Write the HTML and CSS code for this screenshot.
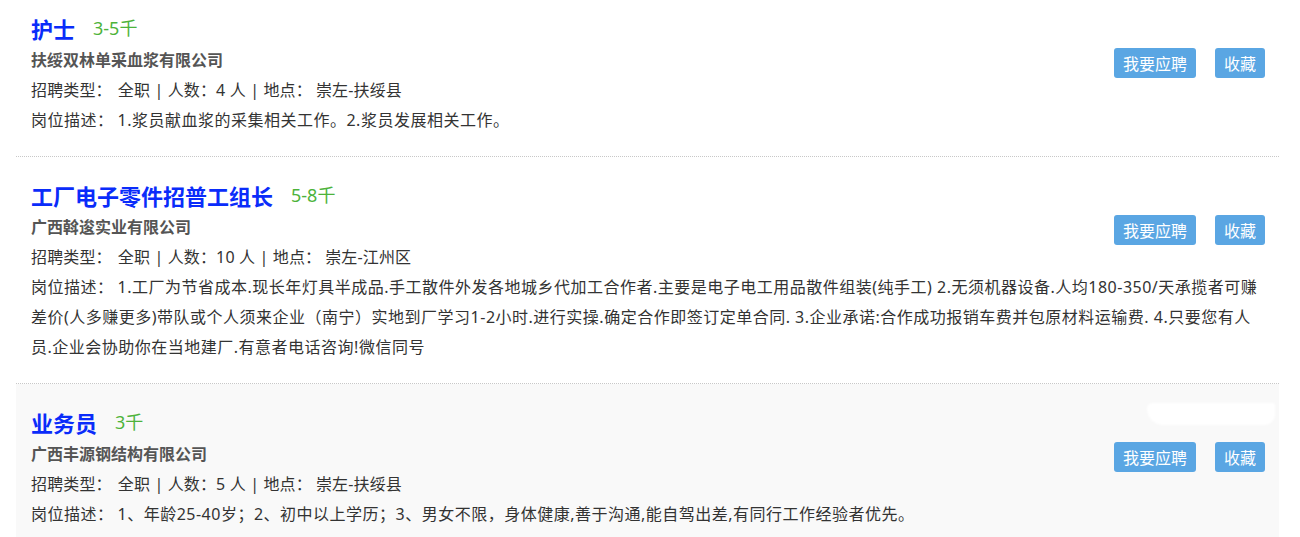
FILE: index.html
```html
<!DOCTYPE html>
<html lang="zh-CN">
<head>
<meta charset="utf-8">
<title>招聘列表</title>
<link rel="stylesheet" href="styles.css">
</head>
<body>
<ul class="job-list">
  <li class="job">
    <div class="job-title"><a class="name">护士</a><span class="salary">3-5千</span></div>
    <div class="company">扶绥双林单采血浆有限公司</div>
    <div class="info"><span class="label">招聘类型：</span>全职 | 人数：4 人 | 地点：<span class="gap"></span>崇左-扶绥县</div>
    <div class="desc"><span class="label">岗位描述：</span>1.浆员献血浆的采集相关工作。2.浆员发展相关工作。</div>
    <div class="actions"><a class="btn">我要应聘</a><a class="btn">收藏</a></div>
  </li>
  <li class="job">
    <div class="job-title"><a class="name">工厂电子零件招普工组长</a><span class="salary">5-8千</span></div>
    <div class="company">广西斡逡实业有限公司</div>
    <div class="info"><span class="label">招聘类型：</span>全职 | 人数：10 人 | 地点：<span class="gap"></span>崇左-江州区</div>
    <div class="desc"><span class="label">岗位描述：</span>1.工厂为节省成本.现长年灯具半成品.手工散件外发各地城乡代加工合作者.主要是电子电工用品散件组装(纯手工) 2.无须机器设备.人均180-350/天承揽者可赚差价(人多赚更多)带队或个人须来企业（南宁）实地到厂学习1-2小时.进行实操.确定合作即签订定单合同. 3.企业承诺:合作成功报销车费并包原材料运输费. 4.只要您有人员.企业会协助你在当地建厂.有意者电话咨询!微信同号</div>
    <div class="actions"><a class="btn">我要应聘</a><a class="btn">收藏</a></div>
  </li>
  <li class="job job-hover">
    <div class="job-title"><a class="name">业务员</a><span class="salary">3千</span></div>
    <div class="company">广西丰源钢结构有限公司</div>
    <div class="info"><span class="label">招聘类型：</span>全职 | 人数：5 人 | 地点：<span class="gap"></span>崇左-扶绥县</div>
    <div class="desc"><span class="label">岗位描述：</span>1、年龄25-40岁；2、初中以上学历；3、男女不限，身体健康,善于沟通,能自驾出差,有同行工作经验者优先。</div>
    <div class="actions"><a class="btn">我要应聘</a><a class="btn">收藏</a></div>
    <span class="smudge"></span>
  </li>
</ul>
</body>
</html>
```

FILE: styles.css
```css
html, body {
  margin: 0;
  padding: 0;
  background: #fff;
}
body {
  font-family: "Noto Sans", "Noto Sans CJK SC", sans-serif;
  color: #333;
  overflow: hidden;
}
.job-list {
  list-style: none;
  margin: -10px 21px 0 16px;
  padding: 0;
}
.job {
  position: relative;
  padding: 23px 15px 21px 15px;
  border-bottom: 1px dotted #c8c8c8;
}
.job-hover {
  background: #f9f9f9;
}
.job-title {
  display: flex;
  align-items: center;
  height: 30px;
  line-height: 30px;
}
.name {
  font-family: "Noto Sans CJK SC", sans-serif;
  font-size: 22px;
  font-weight: bold;
  color: #0a2cfa;
}
.salary {
  margin-left: 18px;
  font-size: 18px;
  color: #4db33b;
}
.company {
  font-family: "Noto Sans CJK SC", sans-serif;
  font-size: 16px;
  font-weight: bold;
  color: #555;
  line-height: 32px;
}
.info, .desc {
  font-size: 16px;
  line-height: 30px;
  color: #333;
}
.info {
  letter-spacing: 0.15px;
}
.desc {
  letter-spacing: 0.5px;
}
.info .label {
  margin-right: 6px;
}
.desc .label {
  margin-right: 4px;
}
.gap {
  display: inline-block;
  width: 4px;
}
.actions {
  position: absolute;
  top: 58px;
  right: 14px;
  display: flex;
  gap: 19px;
}
.btn {
  display: block;
  height: 30px;
  line-height: 30px;
  padding: 0 9px;
  font-family: "Noto Sans CJK SC", sans-serif;
  font-size: 16px;
  color: #fff;
  background: #5aa6e3;
  border-radius: 3px;
}
.smudge {
  position: absolute;
  top: 19px;
  right: 4px;
  width: 128px;
  height: 22px;
  background: #fff;
  border-radius: 10px 4px 20px 30px;
  filter: blur(1px);
}
```
